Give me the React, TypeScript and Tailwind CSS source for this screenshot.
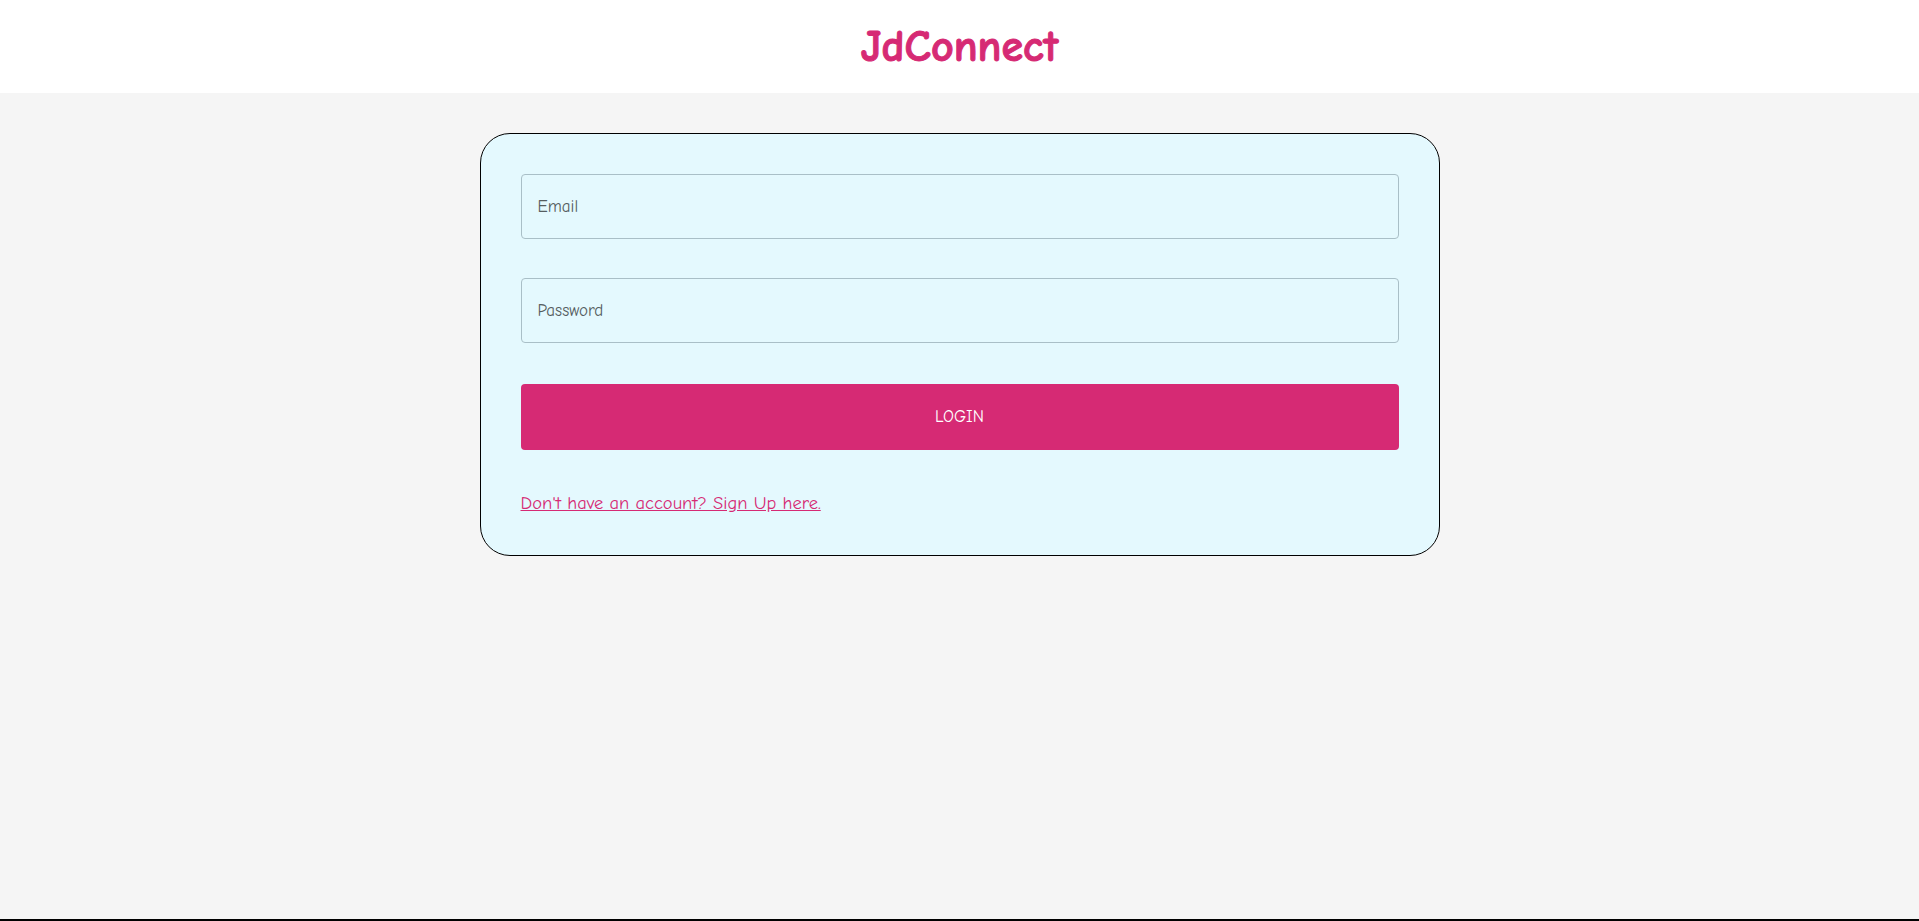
const comic = "font-['Comic_Sans_MS','Comic_Neue','DejaVu_Sans',sans-serif]";

function Field({ type, placeholder }: { type: string; placeholder: string }) {
  return (
    <input
      type={type}
      placeholder={placeholder}
      className={`h-[65px] w-full rounded-[4px] border border-[#a9bfc7] bg-transparent px-[16px] text-[17px] text-[#333] outline-none placeholder:text-[#555d60] ${comic}`}
    />
  );
}

export default function App() {
  return (
    <div className={`flex h-[921px] flex-col overflow-hidden bg-[#f5f5f5] ${comic}`}>
      <header className="flex h-[93px] shrink-0 items-center justify-center bg-white">
        <h1 className="text-[44px] font-bold leading-none text-[#d62a74] [-webkit-text-stroke:1px_#d62a74]">
          JdConnect
        </h1>
      </header>

      <main className="flex flex-1 justify-center pt-[40px]">
        <form
          onSubmit={(e) => e.preventDefault()}
          className="flex h-[423px] w-[960px] flex-col rounded-[30px] border border-black bg-[#e4f9fe] p-[40px]"
        >
          <Field type="email" placeholder="Email" />
          <div className="h-[39px]" />
          <Field type="password" placeholder="Password" />
          <div className="h-[41px]" />
          <button
            type="submit"
            className="h-[66px] w-full rounded-[4px] bg-[#d62a74] text-[17px] uppercase text-white"
          >
            Login
          </button>
          <a href="#" className="mt-[41px] self-start text-[18.5px] leading-[24px] text-[#d62a74] underline">
            Don't have an account? Sign Up here.
          </a>
        </form>
      </main>

      <footer className="h-[2px] shrink-0 bg-black" />
    </div>
  );
}
